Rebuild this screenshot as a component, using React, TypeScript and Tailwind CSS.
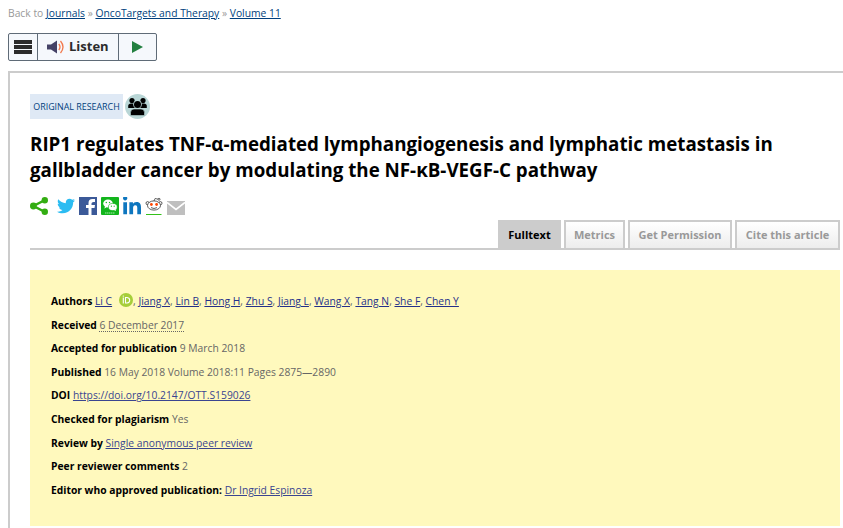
import { FaTwitter, FaLinkedinIn } from "react-icons/fa6"

const tabs = [
  { label: "Fulltext", width: "w-[63px]", active: true },
  { label: "Metrics", width: "w-[61px]" },
  { label: "Get Permission", width: "w-[104px]" },
  { label: "Cite this article", width: "w-[105px]" },
]

const authors = ["Jiang X", "Lin B", "Hong H", "Zhu S", "Jiang L", "Wang X", "Tang N", "She F", "Chen Y"]

const details = [
  { label: "Received", value: "6 December 2017", kind: "dotted" },
  { label: "Accepted for publication", value: "9 March 2018" },
  { label: "Published", value: "16 May 2018 Volume 2018:11 Pages 2875—2890" },
  { label: "DOI", value: "https://doi.org/10.2147/OTT.S159026", kind: "link" },
  { label: "Checked for plagiarism", value: "Yes" },
  { label: "Review by", value: "Single anonymous peer review", kind: "link" },
  { label: "Peer reviewer comments", value: "2" },
  { label: "Editor who approved publication:", value: "Dr Ingrid Espinoza", kind: "link" },
]

const valueClass = (kind?: string) => {
  if (kind === "link") return "text-[#3a4590] underline"
  if (kind === "dotted") return "underline decoration-dotted underline-offset-2"
  return ""
}

const Breadcrumbs = () => (
  <nav className="h-[26px] pl-2 pt-[5px] text-[10.3px] leading-4 text-[#999] whitespace-nowrap">
    Back to <a className="text-[#003f7d] underline">Journals</a> »{" "}
    <a className="text-[#003f7d] underline">OncoTargets and Therapy</a> »{" "}
    <a className="text-[#003f7d] underline">Volume 11</a>
  </nav>
)

const ReaderBar = () => (
  <div className="ml-2 mt-[7px] flex h-7 w-[149px] rounded-[2px] border border-[#5f6b77] bg-[#f5f8fc]">
    <div className="flex w-[29px] items-center justify-center border-r border-[#5f6b77]">
      <svg width="18" height="14" viewBox="0 0 18 14" fill="#2b2b2b">
        <path d="M0 0h18v4H0zM0 5h18v4H0zM0 10h18v4H0z" />
      </svg>
    </div>
    <div className="flex w-[81px] items-center border-r border-[#5f6b77] pl-[9px]">
      <svg width="18" height="14" viewBox="0 0 18 14">
        <path d="M0 4.5h4L10 .5v13L4 9.500H0z" fill="#444266" />
        <path d="M11.800 4q2.400 3 0 6M13.500 1q5 6 0 12" fill="none" stroke="#f2784b" strokeWidth="1.300" />
      </svg>
      <span className="ml-1 text-[13px] font-bold text-[#2b2b2b]">Listen</span>
    </div>
    <div className="flex flex-1 items-center justify-center">
      <svg width="11" height="12" viewBox="0 0 11 12">
        <path d="M0 0l11 6L0 12z" fill="#238040" />
      </svg>
    </div>
  </div>
)

const PeopleBadge = () => (
  <svg className="ml-[2px]" width="25" height="25" viewBox="0 0 25 25">
    <circle cx="12.5" cy="12.5" r="12.5" fill="#b9d6d6" />
    <circle cx="7" cy="6.5" r="2.6" />
    <circle cx="18" cy="6.5" r="2.6" />
    <path d="M3.2 14v-2q0-2.5 3-2.5h12.600q3 0 3 2.500v2z" />
    <circle cx="12.500" cy="10.500" r="4.300" fill="#b9d6d6" />
    <circle cx="12.500" cy="10.500" r="3.500" />
    <path d="M5.500 21.500v-3q0-3.500 3.500-3.500h7q3.500 0 3.500 3.500v3z" stroke="#b9d6d6" strokeWidth=".6" />
  </svg>
)

const ShareIcons = () => (
  <div className="mt-[14px] flex h-[18px] items-center">
    <svg width="18" height="18" viewBox="0 0 18 18" fill="#33ad12">
      <path d="M15 3L3.500 9 15 15" fill="none" stroke="#33ad12" strokeWidth="2.500" />
      <circle cx="14.800" cy="3.200" r="3.200" />
      <circle cx="3.400" cy="9" r="3.400" />
      <circle cx="14.800" cy="14.800" r="3.200" />
    </svg>
    <FaTwitter className="ml-[9px] h-[18px] w-[18px] text-[#2bbcf2]" />
    <svg className="ml-1" width="18" height="18" viewBox="0 0 18 18">
      <path d="M0 0h18v18H0z" fill="#3b5998" />
      <path d="M9.500 18v-7H7V8h2.500V6q0-4 4-4H16v3h-1.500q-2 0-2 1.500V8H16l-.5 3h-3v7z" fill="#fff" />
    </svg>
    <svg className="ml-1" width="18" height="18" viewBox="0 0 18 18">
      <rect width="18" height="18" rx="1" fill="#12b51c" />
      <path d="M4 9.800l-.7 1.700 2.300-1z" fill="#fff" />
      <ellipse cx="7" cy="6.500" rx="4.800" ry="4" fill="#fff" />
      <ellipse cx="11.800" cy="10" rx="4.400" ry="3.600" fill="#fff" stroke="#12b51c" strokeWidth=".6" />
      <path d="M13 13l2 .9-.4-1.800z" fill="#fff" />
      <g fill="#12b51c">
        <circle cx="5.300" cy="5.500" r=".7" />
        <circle cx="8.500" cy="5.500" r=".7" />
        <circle cx="10.400" cy="9.200" r=".6" />
        <circle cx="13.200" cy="9.200" r=".6" />
      </g>
      <path d="M4 16h10" stroke="#a5e5a8" strokeDasharray="1.500 .5" />
    </svg>
    <FaLinkedinIn className="ml-1 h-[18px] w-[18px] text-[#0e76bf]" viewBox="0 20 448 448" />
    <svg className="ml-1" width="18" height="18" viewBox="0 0 18 18">
      <path d="M9 4l1-2.500 3 .6" fill="none" stroke="#333" strokeWidth=".7" />
      <g fill="#fff" stroke="#333" strokeWidth=".8">
        <circle cx="14" cy="2.300" r="1" />
        <circle cx="2.600" cy="6.200" r="1.600" />
        <circle cx="15.400" cy="6.200" r="1.600" />
        <ellipse cx="9" cy="8.500" rx="6.500" ry="4.600" />
      </g>
      <g fill="#ff4500">
        <circle cx="6.400" cy="7.500" r="1.400" />
        <circle cx="11.600" cy="7.500" r="1.400" />
      </g>
      <path d="M6 10.600q3 1.800 6 0" fill="none" stroke="#333" strokeWidth=".8" />
      <path d="M1 17.500h15.500" stroke="#33c11a" strokeWidth="1" />
    </svg>
    <svg className="ml-1 mt-1" width="18" height="14" viewBox="0 0 18 14">
      <path d="M0 0h18v14H0z" fill="#bfbfbf" />
      <path d="M0 1.500l9 7 9-7" fill="none" stroke="#fff" strokeWidth="1.600" />
    </svg>
  </div>
)

const Tabs = () => (
  <div className="mt-[5px] flex h-[30px] w-[810px] justify-end gap-[3px] border-b-2 border-[#ccc]">
    {tabs.map((tab) => (
      <div
        key={tab.label}
        className={`${tab.width} flex items-center justify-center border-2 border-b-0 border-[#ccc] text-[11px] font-bold whitespace-nowrap ${
          tab.active ? "bg-[#ccc] text-black" : "bg-linear-to-b from-white to-[#ededed] text-[#999]"
        }`}
      >
        {tab.label}
      </div>
    ))}
  </div>
)

const OrcidIcon = () => (
  <svg className="ml-[7px] inline-block align-[-2px]" width="14" height="14" viewBox="0 0 14 14">
    <circle cx="7" cy="7" r="7" fill="#a6ce39" />
    <path d="M4.300 4.500v6M6.500 4.500h1.600q2.600.4 2.600 2.800T8.100 10H6.500z" fill="none" stroke="#fff" strokeWidth="1.100" />
    <circle cx="4.300" cy="3.100" r=".7" fill="#fff" />
  </svg>
)

const Details = () => (
  <div className="mt-5 h-[256px] w-[810px] bg-[#fff9bd] pl-[21px] pt-5 text-[10.3px] leading-[23.6px] text-[#666] whitespace-nowrap">
    <div className="h-[23.6px]">
      <b className="text-black">Authors</b> <a className="text-[#24308a] underline">Li C</a>
      <OrcidIcon />
      {authors.map((author) => (
        <span key={author}>
          , <a className="text-[#24308a] underline">{author}</a>
        </span>
      ))}
    </div>
    {details.map((row) => (
      <div key={row.label} className="h-[23.6px]">
        <b className="text-black">{row.label}</b> <span className={valueClass(row.kind)}>{row.value}</span>
      </div>
    ))}
  </div>
)

export default function App() {
  return (
    <div className="h-[528px] overflow-hidden bg-white font-['Open_Sans',sans-serif]">
      <Breadcrumbs />
      <ReaderBar />
      <main className="ml-2 mt-[10px] h-[457px] border-l-2 border-t-2 border-[#ccc] pl-5 pt-[21px]">
        <div className="flex h-[25px] items-center">
          <span className="flex h-[25px] w-[93px] items-center justify-center bg-[#dfe9f5] text-[8.9px] text-[#003f7d] whitespace-nowrap">
            ORIGINAL RESEARCH
          </span>
          <PeopleBadge />
        </div>
        <h1 className="mt-[12px] w-[800px] text-[18.75px] leading-[26px] font-bold text-black">
          <span className="block whitespace-nowrap">RIP1 regulates TNF-α-mediated lymphangiogenesis and lymphatic metastasis in</span>
          <span className="block whitespace-nowrap">gallbladder cancer by modulating the NF-κB-VEGF-C pathway</span>
        </h1>
        <ShareIcons />
        <Tabs />
        <Details />
      </main>
    </div>
  )
}
